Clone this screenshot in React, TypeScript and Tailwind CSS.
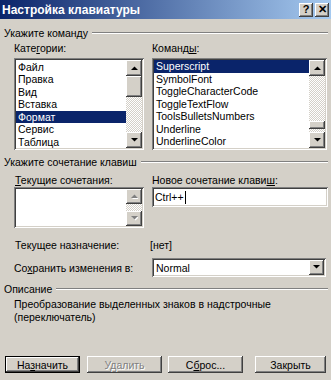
import React from "react";

const raised =
  "bg-[#d4d0c8] shadow-[inset_-1px_-1px_0_#404040,inset_1px_1px_0_#ffffff,inset_-2px_-2px_0_#808080,inset_2px_2px_0_#d4d0c8]";
const sunken =
  "bg-white shadow-[inset_1px_1px_0_#808080,inset_-1px_-1px_0_#ffffff,inset_2px_2px_0_#404040,inset_-2px_-2px_0_#d4d0c8]";
const checker =
  "bg-[repeating-conic-gradient(#ffffff_0%_25%,#d4d0c8_0%_50%)] bg-[length:2px_2px]";

function Arrow({ dir, disabled }: { dir: "up" | "down"; disabled?: boolean }) {
  const pts = dir === "up" ? "0,4 7,4 3.5,0.5" : "0,0 7,0 3.5,3.5";
  return (
    <svg width="7" height="5" viewBox="0 0 7 5">
      {disabled && <polygon points={pts} transform="translate(1,1)" fill="#ffffff" />}
      <polygon points={pts} fill={disabled ? "#808080" : "#000000"} />
    </svg>
  );
}

function SbButton({ dir, h = 16, disabled }: { dir: "up" | "down"; h?: number; disabled?: boolean }) {
  return (
    <div className={`${raised} w-[16px] flex items-center justify-center ${h === 16 ? "h-[16px]" : "h-[15px]"}`}>
      <Arrow dir={dir} disabled={disabled} />
    </div>
  );
}

function Group({ title }: { title: string }) {
  return (
    <div className="flex items-center h-[14px] pl-[4px] pr-[3px]">
      <span className="pr-[4px]">{title}</span>
      <div className="flex-1 h-[2px] border-t border-b border-t-[#808080] border-b-white" />
    </div>
  );
}

function Row({ text, selected }: { text: string; selected?: boolean }) {
  return (
    <div
      className={`h-[12.5px] leading-[12.5px] pl-[2px] whitespace-nowrap ${
        selected ? "bg-[#0a246a] text-white" : "text-black"
      }`}
    >
      {text}
    </div>
  );
}

export default function App() {
  const cats = ["Файл", "Правка", "Вид", "Вставка", "Формат", "Сервис", "Таблица"];
  const cmds = [
    "Superscript",
    "SymbolFont",
    "ToggleCharacterCode",
    "ToggleTextFlow",
    "ToolsBulletsNumbers",
    "Underline",
    "UnderlineColor",
  ];

  return (
    <div
      className="w-[331px] h-[380px] bg-[#d4d0c8] text-black text-[10.5px] leading-[14px] overflow-hidden"
      style={{ fontFamily: '"Liberation Sans", Arial, sans-serif' }}
    >
      {/* Title bar */}
      <div className="h-[19px] flex items-center bg-[linear-gradient(to_right,#0a246a,#a6caf0)] pl-[2px] pr-[2px]">
        <span className="text-white font-bold text-[12px] flex-1">Настройка клавиатуры</span>
        <div className={`${raised} w-[14px] h-[14px] flex items-center justify-center font-bold text-[11px] leading-none`}>
          ?
        </div>
        <div className={`${raised} ml-[2px] w-[14px] h-[14px] flex items-center justify-center font-bold text-[11px] leading-none`}>
          ✕
        </div>
      </div>

      <div className="mt-[7px]">
        <Group title="Укажите команду" />
      </div>

      <div className="mt-[1px] flex h-[14px] items-center pl-[14px]">
        <span className="w-[138px]">
          Кате<span className="underline">г</span>ории:
        </span>
        <span>
          Команд<span className="underline">ы</span>:
        </span>
      </div>

      {/* Lists */}
      <div className="mt-[3px] flex pl-[14px] gap-[8px]">
        <div className={`${sunken} w-[130px] h-[92px] p-[2px] flex`}>
          <div className="flex-1 pt-[0.5px]">
            {cats.map((c) => (
              <Row key={c} text={c} selected={c === "Формат"} />
            ))}
          </div>
          <div className="w-[16px] flex flex-col">
            <SbButton dir="up" />
            <div className={`${raised} h-[21px]`} />
            <div className={`${checker} flex-1`} />
            <SbButton dir="down" />
          </div>
        </div>
        <div className={`${sunken} w-[175px] h-[92px] p-[2px] flex`}>
          <div className="flex-1">
            {cmds.map((c) => (
              <Row key={c} text={c} selected={c === "Superscript"} />
            ))}
          </div>
          <div className="w-[16px] flex flex-col">
            <SbButton dir="up" />
            <div className={`${checker} flex-1`} />
            <div className={`${raised} h-[8px]`} />
            <div className={`${checker} h-[3px]`} />
            <SbButton dir="down" />
          </div>
        </div>
      </div>

      <div className="mt-[5px]">
        <Group title="Укажите сочетание клавиш" />
      </div>

      <div className="mt-[4px] flex h-[14px] items-center pl-[15px]">
        <span className="w-[137px]">
          <span className="underline">Т</span>екущие сочетания:
        </span>
        <span>
          Новое сочетание клави<span className="underline">ш</span>:
        </span>
      </div>

      <div className="flex pl-[14px] gap-[8px]">
        <div className={`${sunken} w-[130px] h-[41px] p-[2px] flex`}>
          <div className="flex-1" />
          <div className="w-[16px] flex flex-col">
            <SbButton dir="up" h={15} disabled />
            <div className={`${checker} flex-1`} />
            <SbButton dir="down" h={15} disabled />
          </div>
        </div>
        <div className={`${sunken} w-[176px] h-[20px] pl-[3px] flex items-center`}>
          <span>Ctrl++</span>
          <span className="ml-[1px] w-[1px] h-[13px] bg-black" />
        </div>
      </div>

      <div className="mt-[10px] flex h-[14px] items-center pl-[15px]">
        <span className="w-[135px]">Текущее назначение:</span>
        <span>[нет]</span>
      </div>

      <div className="mt-[6px] flex h-[19px] items-center pl-[14px]">
        <span className="w-[138px]">
          Со<span className="underline">х</span>ранить изменения в:
        </span>
        <div className={`${sunken} w-[174px] h-[19px] p-[2px] flex items-center`}>
          <span className="flex-1 pl-[2px]">Normal</span>
          <div className={`${raised} w-[15px] h-[15px] flex items-center justify-center`}>
            <Arrow dir="down" />
          </div>
        </div>
      </div>

      <div className="mt-[5px]">
        <Group title="Описание" />
      </div>

      <div className="mt-[2px] pl-[14px] leading-[13px]">
        <div>Преобразование выделенных знаков в надстрочные</div>
        <div>(переключатель)</div>
      </div>

      {/* Buttons */}
      <div className="mt-[32px] flex pl-[5px]">
        <div className="w-[75px] h-[17px] border border-black">
          <div className={`${raised} w-full h-full flex items-center justify-center`}>
            <span>
              На<span className="underline">з</span>начить
            </span>
          </div>
        </div>
        <div className={`${raised} ml-[7px] w-[75px] h-[17px] flex items-center justify-center text-[#808080] [text-shadow:1px_1px_0_#ffffff]`}>
          Удалить
        </div>
        <div className={`${raised} ml-[6px] w-[75px] h-[17px] flex items-center justify-center`}>
          <span>
            С<span className="underline">б</span>рос...
          </span>
        </div>
        <div className={`${raised} ml-[12px] w-[71px] h-[17px] flex items-center justify-center`}>
          Закрыть
        </div>
      </div>
    </div>
  );
}
